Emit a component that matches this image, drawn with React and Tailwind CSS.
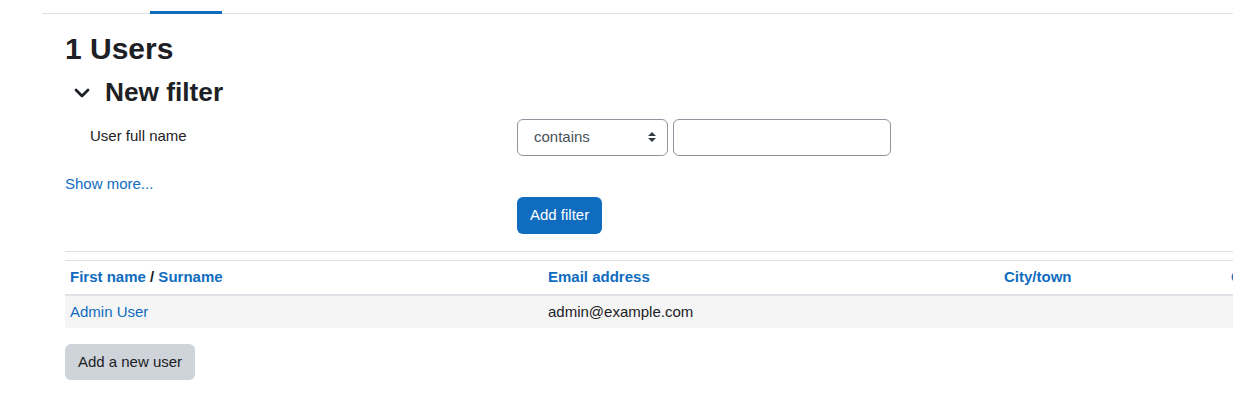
import React from "react";

export default function App() {
  return (
    <div className="w-[1233px] h-[420px] overflow-hidden bg-white text-[#1d2125] text-[15px] leading-[22.5px]" style={{ fontFamily: '"Liberation Sans", Arial, sans-serif' }}>
      <div className="pl-[42px]">
        <div className="flex items-end h-[14px] border-b border-[#dee2e6]">
          <div className="ml-[108px] w-[72px] h-[3px] -mb-px bg-[#0f6cbf]" />
        </div>
      </div>
      <div className="pl-[65px]">
        <h2 className="mt-[17px] text-[30px] leading-[36px] font-bold">1 Users</h2>
        <div className="mt-[10px] flex items-center h-[31.5px]">
          <div className="w-[40px] flex items-center pl-[9px]">
            <svg width="16" height="10" viewBox="0 0 16 10" className="text-[#1d2125]">
              <path d="M2 2 L8 8 L14 2" fill="none" stroke="currentColor" strokeWidth="2.8" strokeLinecap="round" strokeLinejoin="round" />
            </svg>
          </div>
          <h3 className="text-[26.25px] leading-[31.5px] font-bold">New filter</h3>
        </div>
        <div className="mt-[10px] flex">
          <div className="w-[452px] pl-[25px] pt-[6px]">User full name</div>
          <div className="flex gap-[5px]">
            <div className="w-[151px] h-[37px] border border-[#8f959e] rounded-[6px] flex items-center justify-between pl-[16px] pr-[11px] text-[#495057]">
              <span>contains</span>
              <svg width="8" height="10" viewBox="0 0 8 10">
                <path d="M0 4 L4 0 L8 4 Z" fill="#343a40" />
                <path d="M0 6 L4 10 L8 6 Z" fill="#343a40" />
              </svg>
            </div>
            <div className="w-[218px] h-[37px] border border-[#8f959e] rounded-[6px]" />
          </div>
        </div>
        <div className="mt-[17px] text-[#0f6cbf]">Show more...</div>
        <div className="mt-[2px] pl-[452px]">
          <button className="h-[37px] px-[13px] rounded-[6px] bg-[#0f6cbf] text-white">Add filter</button>
        </div>
        <div className="mt-[17px] border-t border-[#dee2e6]" />
        <div className="mt-[8px] border-t border-[#dee2e6]">
          <div className="grid grid-cols-[478px_456px_227px_200px] h-[35px] items-center border-b-2 border-[#dee2e6] font-bold text-[#0f6cbf]">
            <div className="pl-[5px]">First name <span className="text-[#1d2125]">/</span> Surname</div>
            <div className="pl-[5px]">Email address</div>
            <div className="pl-[5px]">City/town</div>
            <div className="pl-[5px]">Country</div>
          </div>
          <div className="grid grid-cols-[478px_456px_227px_200px] h-[32px] items-center bg-[#f5f5f5]">
            <div className="pl-[5px] text-[#0f6cbf]">Admin User</div>
            <div className="pl-[5px]">admin@example.com</div>
            <div className="pl-[5px]"></div>
            <div className="pl-[5px]"></div>
          </div>
        </div>
        <div className="mt-[16px]">
          <button className="h-[36px] w-[130px] rounded-[6px] bg-[#ced4da] text-[#1d2125]">Add a new user</button>
        </div>
      </div>
    </div>
  );
}
